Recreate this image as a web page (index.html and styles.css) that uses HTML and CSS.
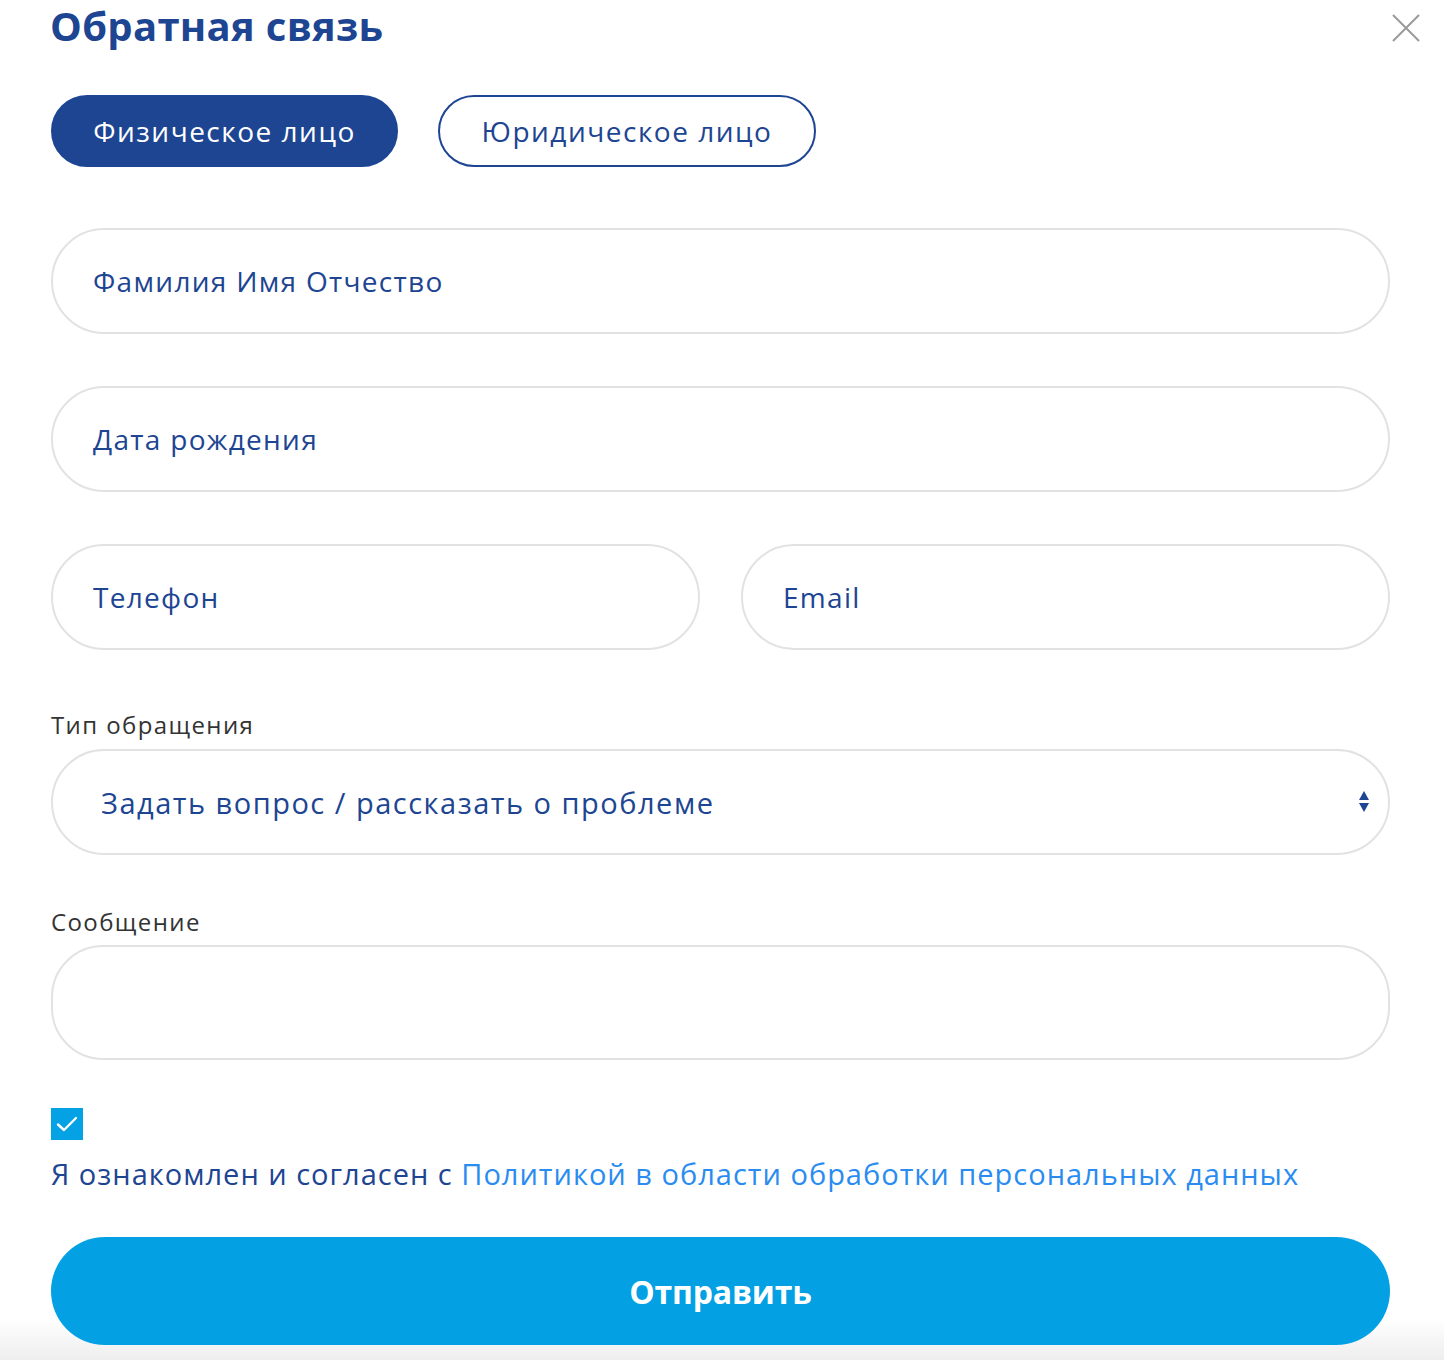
FILE: index.html
```html
<!DOCTYPE html>
<html lang="ru">
<head>
<meta charset="utf-8">
<title>Обратная связь</title>
<link rel="stylesheet" href="styles.css">
</head>
<body>
<div class="modal">
  <div class="header">
    <h1 class="title">Обратная связь</h1>
    <button class="close" aria-label="Закрыть">
      <svg width="28" height="28" viewBox="0 0 28 28"><path d="M1 1L27 27M27 1L1 27" stroke="#9a9a9a" stroke-width="2" fill="none"/></svg>
    </button>
  </div>
  <div class="tabs">
    <button class="tab tab-active">Физическое лицо</button>
    <button class="tab">Юридическое лицо</button>
  </div>
  <div class="fields">
    <div class="field">Фамилия Имя Отчество</div>
    <div class="field">Дата рождения</div>
    <div class="row">
      <div class="field">Телефон</div>
      <div class="field">Email</div>
    </div>
  </div>
  <div class="label label-type">Тип обращения</div>
  <div class="field select">
    <span>Задать вопрос / рассказать о проблеме</span>
    <svg class="arrows" width="12" height="24" viewBox="0 0 12 24"><path d="M6 1L11 10H1Z" fill="#1d4592"/><path d="M1 13H11L6 22Z" fill="#1d4592"/></svg>
  </div>
  <div class="label label-msg">Сообщение</div>
  <div class="textarea"></div>
  <div class="check">
    <svg width="32" height="32" viewBox="0 0 32 32"><rect width="32" height="32" fill="#04a1e4"/><path d="M7 16.5L13 22L25 10" stroke="#fff" stroke-width="2.4" fill="none" stroke-linecap="round" stroke-linejoin="round"/></svg>
  </div>
  <p class="agree">Я ознакомлен и согласен с <a href="#" class="link">Политикой в области обработки персональных данных</a></p>
  <button class="submit">Отправить</button>
</div>
</body>
</html>
```
FILE: styles.css
```css
html {
  background: linear-gradient(to bottom, #ffffff 0, #ffffff 1318px, #eeeeee 1360px);
  min-height: 1360px;
}
body {
  margin: 0;
  font-family: "Open Sans", "Noto Sans", sans-serif;
  color: #1d4592;
}
.modal {
  width: 1339px;
  padding: 0 0 0 51px;
}
.header {
  display: flex;
  justify-content: space-between;
  align-items: flex-start;
  height: 95px;
}
.title {
  margin: 0 0 0 -1px;
  font-size: 40px;
  line-height: 52px;
  font-weight: 700;
  letter-spacing: 0.3px;
  color: #1d4592;
}
.close {
  border: none;
  background: none;
  padding: 0;
  margin: 14px -30px 0 0;
  width: 28px;
  height: 28px;
  cursor: pointer;
}
.tabs {
  display: flex;
  gap: 40px;
}
.tab {
  height: 72px;
  border-radius: 36px;
  border: 2px solid #1d4592;
  background: #fff;
  color: #1d4592;
  font-family: "Open Sans", "Noto Sans", sans-serif;
  font-size: 28px;
  padding: 0;
  letter-spacing: 1.5px;
}
.tab-active {
  background: #1d4592;
  color: #fff;
  width: 347px;
}
.tab:not(.tab-active) {
  width: 378px;
}
.fields {
  margin-top: 61px;
  display: flex;
  flex-direction: column;
  gap: 52px;
}
.row {
  display: flex;
  gap: 41px;
}
.row .field {
  flex: 1;
}
.field {
  box-sizing: border-box;
  height: 106px;
  border: 2px solid #e2e2e2;
  border-radius: 53px;
  display: flex;
  align-items: center;
  padding: 0 40px;
  font-size: 28px;
  letter-spacing: 1.3px;
  color: #1d4592;
}
.label {
  font-size: 24px;
  color: #333333;
  line-height: 30px;
  letter-spacing: 1.4px;
}
.label-type {
  margin-top: 60px;
  margin-bottom: 9px;
}
.select {
  justify-content: space-between;
  padding: 0 18px 0 48px;
  font-size: 29px;
  letter-spacing: 1.5px;
}
.label-msg {
  margin-top: 52px;
  margin-bottom: 8px;
}
.textarea {
  box-sizing: border-box;
  height: 115px;
  border: 2px solid #e2e2e2;
  border-radius: 52px;
}
.check {
  margin-top: 48px;
  height: 32px;
}
.check svg {
  display: block;
}
.agree {
  margin: 13px 0 0;
  font-size: 29px;
  line-height: 42px;
  color: #1d4592;
  letter-spacing: 1px;
  white-space: nowrap;
}
.link {
  color: #2a8cf0;
  text-decoration: none;
}
.submit {
  display: block;
  margin-top: 42px;
  width: 1339px;
  height: 108px;
  border: none;
  border-radius: 54px;
  background: #03a1e4;
  color: #fff;
  font-family: "Open Sans", "Noto Sans", sans-serif;
  font-size: 32px;
  font-weight: 700;
  letter-spacing: -0.2px;
}
```
